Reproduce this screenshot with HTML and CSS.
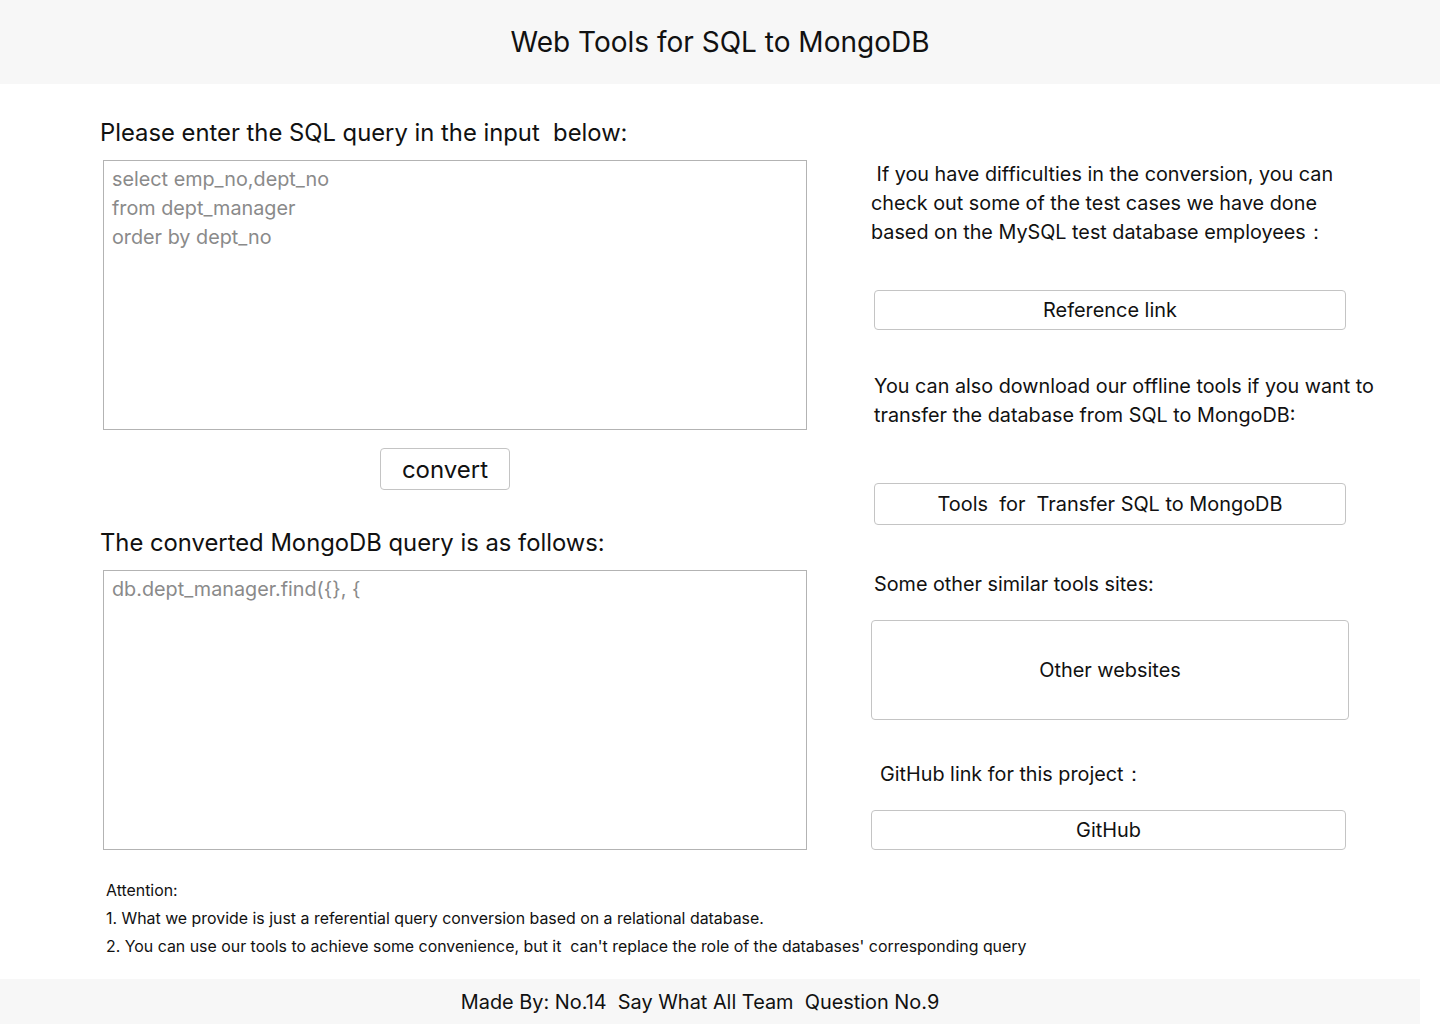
FILE: index.html
```html
<!DOCTYPE html>
<html lang="en">
<head>
<meta charset="utf-8">
<title>Web Tools for SQL to MongoDB</title>
<link rel="stylesheet" href="styles.css">
</head>
<body>
<header class="header"><h1 class="title">Web Tools for SQL to MongoDB</h1></header>
<main class="main">
  <section class="left">
    <h2 class="label label-first">Please enter the SQL query in the input&nbsp; below:</h2>
    <div class="box box-input">select emp_no,dept_no<br>from dept_manager<br>order by dept_no</div>
    <button class="convert">convert</button>
    <h2 class="label label-second">The converted MongoDB query is as follows:</h2>
    <div class="box box-output">db.dept_manager.find({}, {</div>
  </section>
  <aside class="right">
    <p class="text t1">&nbsp;If you have difficulties in the conversion, you can check out some of the test cases we have done based on the MySQL test database employees：</p>
    <a class="btn b1">Reference link</a>
    <p class="text t2">You can also download our offline tools if you want to transfer the database from SQL to MongoDB:</p>
    <a class="btn b2">Tools&nbsp; for&nbsp; Transfer SQL to MongoDB</a>
    <p class="text t3">Some other similar tools sites:</p>
    <a class="btn b3">Other websites</a>
    <p class="text t4">GitHub link for this project：</p>
    <a class="btn b4">GitHub</a>
  </aside>
</main>
<div class="attention">
  <p>Attention:</p>
  <p>1. What we provide is just a referential query conversion based on a relational database.</p>
  <p>2. You can use our tools to achieve some convenience, but it&nbsp; can't replace the role of the databases' corresponding query</p>
</div>
<footer class="footer">Made By: No.14&nbsp; Say What All Team&nbsp; Question No.9</footer>
</body>
</html>
```
FILE: styles.css
```css
* { box-sizing: border-box; }
body {
  margin: 0;
  font-family: Inter, "Noto Sans", sans-serif;
  color: #111;
  background: #fff;
}
.header {
  height: 84px;
  background: #f7f7f7;
  display: flex;
  align-items: center;
  justify-content: center;
}
.title {
  margin: 0;
  font-size: 28px;
  font-weight: 400;
  line-height: 34px;
}
.main {
  display: flex;
  padding-left: 100px;
}
.left {
  width: 707px;
  display: flex;
  flex-direction: column;
  align-items: flex-start;
}
.label {
  margin: 0;
  font-size: 23.8px;
  font-weight: 400;
  line-height: 30px;
}
.label-first { margin-top: 34px; }
.label-second { margin-top: 38px; }
.box {
  margin-top: 12px;
  margin-left: 3px;
  width: 704px;
  border: 1px solid #b3b3b3;
  padding: 4px 8px;
  font-size: 19.8px;
  line-height: 29px;
  color: #8a8a8a;
}
.box-input { height: 270px; }
.box-output { height: 280px; }
.convert {
  margin-top: 18px;
  margin-left: 280px;
  width: 130px;
  height: 42px;
  border: 1px solid #c4c4c4;
  border-radius: 4px;
  background: #fff;
  font-family: inherit;
  font-size: 24px;
  color: #111;
  padding: 0;
}
.right {
  margin-left: 64px;
  width: 478px;
  display: flex;
  flex-direction: column;
  align-items: flex-start;
}
.text {
  margin: 0;
  font-size: 19.8px;
  line-height: 29px;
}
.t1 { margin-top: 75.5px; width: 475px; }
.t2 { margin-top: 41.5px; margin-left: 3px; width: 510px; }
.t3 { margin-top: 44.5px; margin-left: 3px; }
.t4 { margin-top: 39.5px; margin-left: 9px; }
.btn {
  display: flex;
  align-items: center;
  justify-content: center;
  border: 1px solid #c4c4c4;
  border-radius: 4px;
  background: #fff;
  font-size: 19.9px;
  color: #111;
}
.b1 { margin-top: 43.5px; margin-left: 3px; width: 472px; height: 40px; }
.b2 { margin-top: 53.5px; margin-left: 3px; width: 472px; height: 42px; }
.b3 { margin-top: 21.5px; width: 478px; height: 100px; }
.b4 { margin-top: 21.5px; width: 475px; height: 40px; }
.attention {
  margin: 27px 0 0 106px;
  font-size: 15.9px;
  line-height: 28px;
}
.attention p { margin: 0; }
.footer {
  margin-top: 18px;
  width: 1420px;
  height: 45px;
  background: #f7f7f7;
  display: flex;
  align-items: center;
  justify-content: center;
  padding-right: 20px;
  font-size: 19.9px;
}
```
